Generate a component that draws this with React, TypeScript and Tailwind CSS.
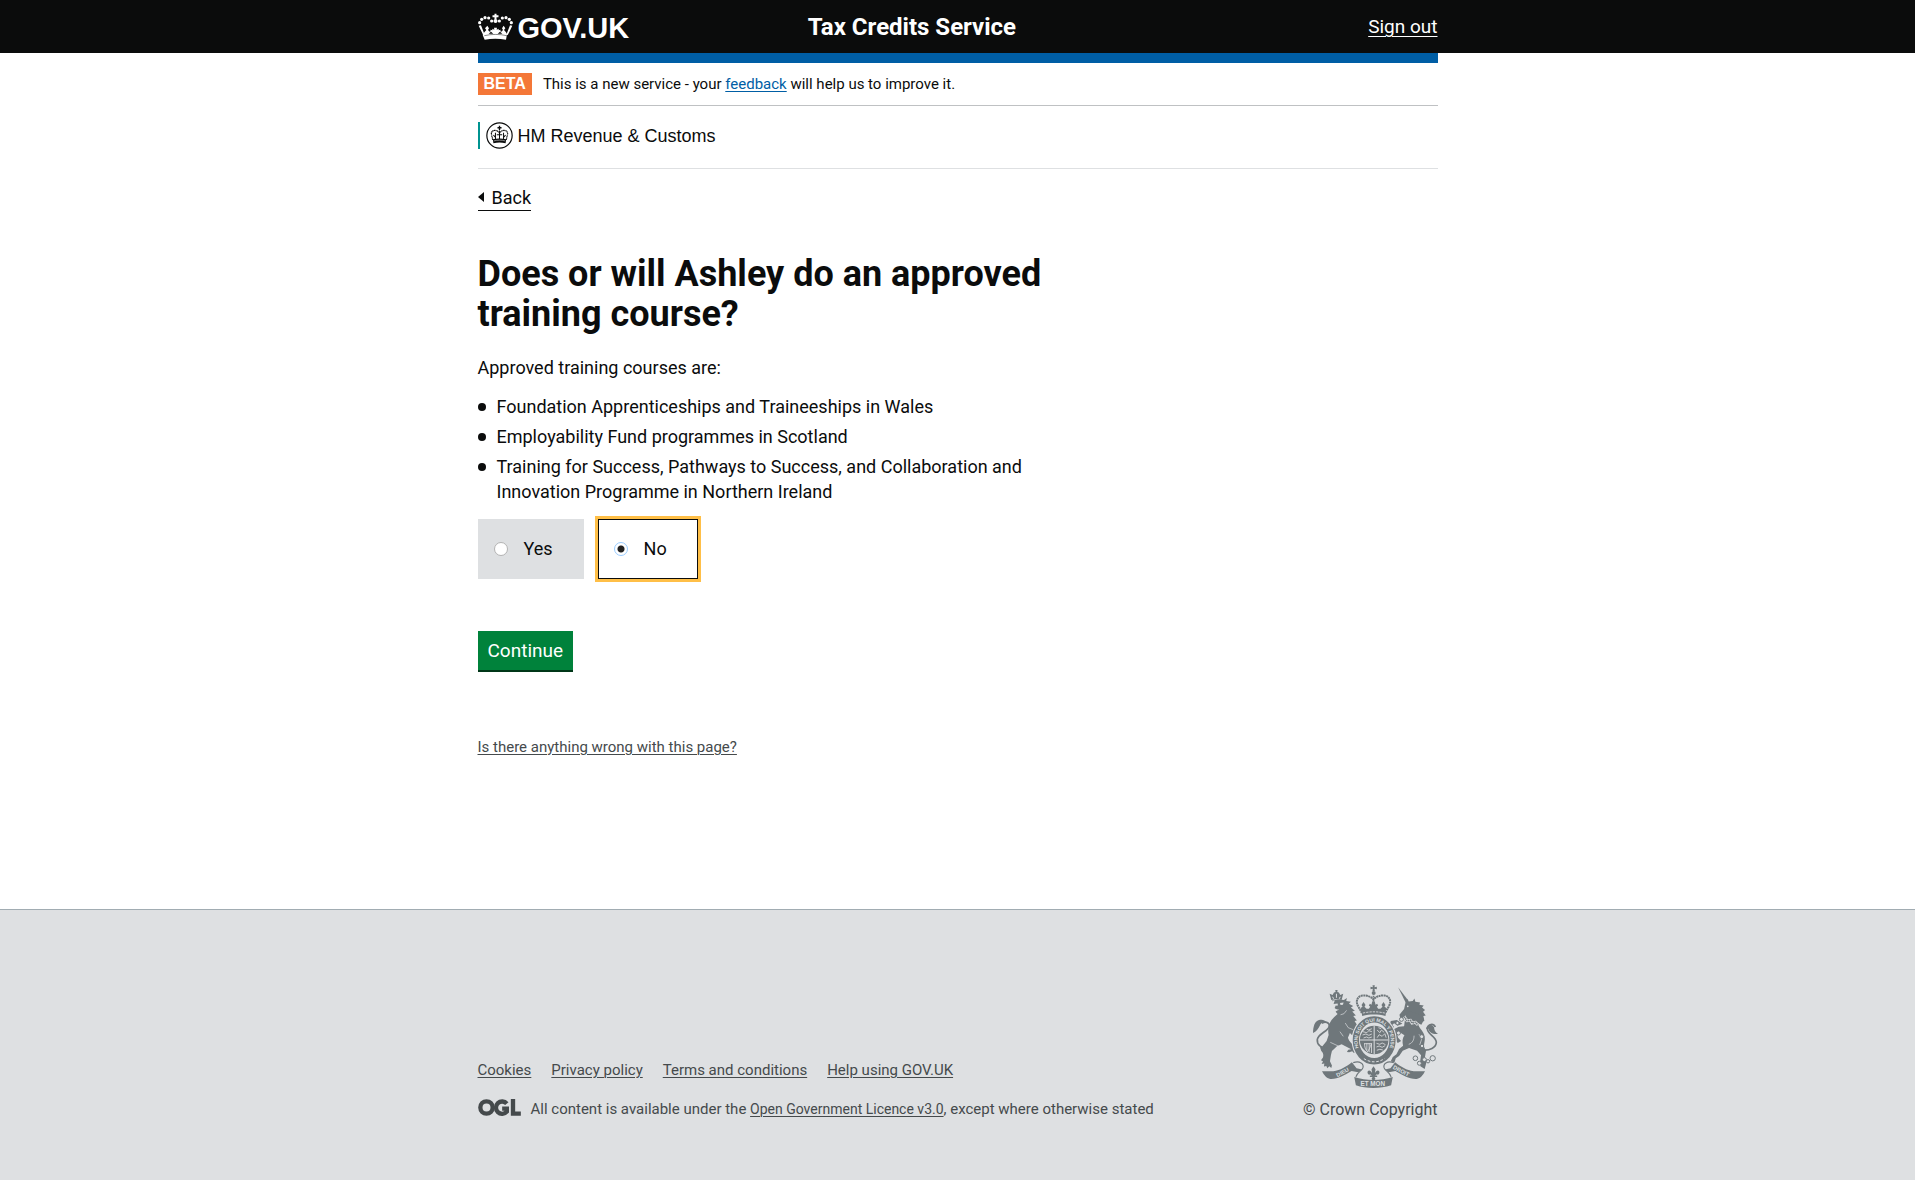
import { useState } from "react";

const footerLinks = ["Cookies", "Privacy policy", "Terms and conditions", "Help using GOV.UK"];

const courses = [
  "Foundation Apprenticeships and Traineeships in Wales",
  "Employability Fund programmes in Scotland",
  "Training for Success, Pathways to Success, and Collaboration and Innovation Programme in Northern Ireland",
];

function HeaderCrown() {
  return (
    <svg viewBox="24 36 105 81" className="h-[27px] w-[35px]" fill="#fff" aria-hidden="true">
      <path d="M73.500 38h6v5h6v6h-6v6h-6v-6h-6v-6h6z" />
      <circle cx="76.500" cy="60" r="6" />
      {[[65, 60], [56, 51], [45, 50], [35, 55], [29, 65], [88, 60], [97, 51], [108, 50], [118, 55], [124, 65]].map(([x, y]) => (
        <circle key={`${x}-${y}`} cx={x} cy={y} r="4.800" />
      ))}
      <path d="M26 74l7-1 9 23 2 4-4 3zM127 74l-7-1-9 23-2 4 4 3z" />
      <path d="M52 74l5 8-3 5 5 5 3-1-1-5 6 2v-5l6 3-1-6h9l-1 6 6-3v5l6-2-1 5 3 1 5-5-3-5 5-8 5 8-4 5 6 7 3 6-3 16c-21-4-43-4-64 0l-6-14 5-8 6-7-4-5z" />
      <path d="M43 104c21-5 46-5 67 0" stroke="#0b0c0c" strokeWidth="1.500" fill="none" />
      <path d="M56 98l7-6 7 6zM83 98l7-6 7 6z" fill="#0b0c0c" />
    </svg>
  );
}

function DepartmentCrest() {
  return (
    <svg viewBox="47 65 80 80" className="size-[27px]" fill="#0b0c0c" aria-hidden="true">
      <circle cx="87" cy="105" r="37.500" fill="none" stroke="#0b0c0c" strokeWidth="3.500" />
      <path d="M85 76h4v4h4v4h-4v5h-4v-5h-4v-4h4z" />
      <path d="M67 118L63 101c-1-7 5-12 12-11 6 1 9 4 12 8 3-4 6-7 12-8 7-1 13 4 12 11l-4 17" fill="none" stroke="#0b0c0c" strokeWidth="3.500" strokeDasharray="3.500 1" />
      <path d="M87 90v28M79 103h16M75 97v19M99 97v19M69 104l7 7M105 104l-7 7" fill="none" stroke="#0b0c0c" strokeWidth="3" />
      <path d="M67 116c13-3 27-3 40 0l-2 12c-12-3-24-3-36 0z" />
      <path d="M70 121c12-3 22-3 34 0" fill="none" stroke="#fff" strokeWidth="1.500" />
    </svg>
  );
}

function OglLogo() {
  return (
    <svg viewBox="24 144 128 51" className="h-[17px] w-[43px] shrink-0" fill="none" stroke="#454a4c" strokeWidth="13" role="img" aria-label="Open Government Licence">
      <circle cx="49" cy="169.500" r="18.500" />
      <path d="M110 158A18.500 18.500 0 1 0 110 182V173H96" />
      <path d="M128.500 144v44H152" />
    </svg>
  );
}

function RoyalArms() {
  const bg = "#dee0e2";
  return (
    <svg viewBox="69 44 376 309" className="h-[103px] w-[125px]" fill="#6f777b" stroke="none" role="img" aria-label="Royal coat of arms">
      {/* central crown */}
      <path d="M248 44h7l-1 6 7-1v7l-7-1 1 7h-7l1-7-7 1v-7l7 1z" />
      <circle cx="251.500" cy="68" r="6" />
      <path d="M216 128L203 104c-6-14 1-27 15-29 14-1 26 4 33 12 7-8 19-13 33-12 14 2 21 15 15 29l-13 24" fill="none" stroke="#6f777b" strokeWidth="6" strokeDasharray="6 1.500" />
      <path d="M251 76v42" stroke="#6f777b" strokeWidth="5" strokeDasharray="5 1.500" />
      <path d="M215 127l-3-14 6-4-3-5 6-9 6 9-3 5 6 6 7 0 4-6-4-4 3-5 5 3 2-10h8l2 10 5-3 3 5-4 4 4 6 7 0 6-6-3-5 6-9 6 9-3 5 6 4-3 14z" />
      <path d="M215 123c24-7 50-7 74 0l-2 14c-24-6-46-6-70 0z" />
      <path d="M219 128c22-5 44-5 66 0" fill="none" stroke={bg} strokeWidth="2.500" strokeDasharray="7 3" />

      {/* lion */}
      <path d="M124 89l-5-19 9 4 4-8 5-1-1-6h7l-1 6 5 1 4 8 9-4-5 19c-10-3-21-3-31 0z" />
      <path d="M128 79l3 6M139.500 70v12M151 79l-3 6" stroke={bg} strokeWidth="3" />
      <path d="M126 93c10-7 26-7 36-4l9-6-2 9 14 2-6 6 13 7-7 4 12 10-8 2 11 12-8 2 11 13-7 2 10 16c-3 12-2 24-1 34l-11-2-12-12-6 14c3 11 14 20 22 28l5 3 7 12-6 6-4-6-6 3-5-5-9 3-7-1 4-7 9-1-29-15-14 6-15 14-3 12-3 19 6 13-2 7-6-5-6 6-3-7-7 2 1-9-8 1 4-8-6-3 6-8c2-9 1-14-5-20l-4-11 6-2 14-17 6-18c-4-22 1-39 17-54l10-9-6-7 5-5-8-6 3-7-6-6 3-8-5-5 4-7z" />
      <path d="M131 101l12-2 1 6-10 1zM150 98l11-2-2 7-7 1zM134 116l14 2-11 4z" fill={bg} />
      <path d="M170 120l-8 10-10 3M166 158l9 14 15 6M150 184l10 14M121 216l26 12" stroke={bg} strokeWidth="2" fill="none" />
      <path d="M113 233c-19 3-33-11-31-26 3-17 34-25 36-40 1-12-14-15-22-8" fill="none" stroke="#6f777b" strokeWidth="5" />
      <path d="M69 188c1-20 4-34 18-39 10-3 18 0 22 6-10-1-17 4-20 12-4 8-10 17-20 21z" />

      {/* unicorn */}
      <path d="M325 50l31 41-8 6z" />
      <path d="M347 98l5-13 5 8 12-1 5-8 3 10 14 2-2 7 13 2-5 6 9 8-6 5 8 11-7 2 3 15-11 3c-10-11-24-17-40-22l-7 3-7 7-8-2-2-8 14-17z" />
      <path d="M347 136l10-14 40 12 6 14-8 15-48-22z" />
      <path d="M347 137l38 24c4 14 17 22 20 38 2 12-3 20-2 30l6 12-4 24 5 12-5 19-13-8-1-13 3-20-12-14-24-8-19 8-11 16-10 7-4 13-11-4 6-13 11-8 8-16 12-10c-3-12-2-22 4-31l-14-9-8 4 3 12 9 10-10 6-8-10-6-15 2-16 15-8 16-1z" />
      <path d="M338 160l-17-11-18 3-4 13 7 8 7-2-5-8 5-4 10 7z" />
      <path d="M343 139l9 12 10-1 5 8 10-2 8 8" fill="none" stroke={bg} strokeWidth="9" />
      <path d="M343 139l9 12 10-1 5 8 10-2 8 8" fill="none" stroke="#6f777b" strokeWidth="5" strokeDasharray="4 2" />
      <path d="M357 222c12-4 16-14 16-26M388 192l8 14-6 18" fill="none" stroke={bg} strokeWidth="2" />
      <circle cx="354" cy="108" r="2.500" fill={bg} />
      <path d="M398 239c21 3 42-7 42-23 0-18-29-25-27-42 2-13 18-17 24-4" fill="none" stroke="#6f777b" strokeWidth="5" />
      <path d="M409 176c1-14 18-18 24-5 1 9 3 14 12 20-16 2-28-6-29-16z" />
      <g fill={bg} stroke="#6f777b" strokeWidth="3">
        <circle cx="335" cy="147" r="6" />
        <circle cx="323" cy="158" r="5" />
        <circle cx="326" cy="188" r="6" />
        <circle cx="396" cy="199" r="6" />
        <circle cx="397" cy="227" r="5" />
        <circle cx="377" cy="264" r="7" />
        <circle cx="389" cy="279" r="6" />
        <circle cx="404" cy="268" r="6" />
        <circle cx="415" cy="273" r="5" />
        <circle cx="429" cy="264" r="8" />
      </g>

      {/* garter and shield */}
      <ellipse cx="253" cy="210" rx="68" ry="76" fill={bg} />
      <ellipse cx="253" cy="210" rx="55" ry="63" fill="none" stroke="#6f777b" strokeWidth="19" />
      <path id="garter" d="M218 253A50 58 0 1 1 288 253" fill="none" />
      <text fill={bg} fontSize="15" fontWeight="700" textAnchor="middle" fontFamily="Liberation Sans, sans-serif">
        <textPath href="#garter" startOffset="50%">HONI SOIT QUI MAL Y PENSE</textPath>
      </text>
      <path d="M222 265c19 13 43 13 62 0" fill="none" stroke={bg} strokeWidth="3" strokeDasharray="8 5" />
      <circle cx="253" cy="209" r="43" />
      <path d="M253 166v86M210 209h86" stroke={bg} strokeWidth="3" />
      <path d="M219 184l12 3 6-6 9 3M218 194l10-3 9 4 9-4M221 203l9-3 7 3 9-3M230 176l6 3 10-4M262 179l8 8 5-8 8 7M262 202l6-9 9 5 8-8 4 12M266 172l8 3M260 219l10 3 7-4 10 5M260 230l8-3 9 4 9-5M261 240l9-3 9 2M224 219c0 10 2 20 10 25M231 219v22M238 219v27M245 219v29M223 220h22c-5 12-8 20-12 25" fill="none" stroke={bg} strokeWidth="2.500" />

      {/* fleur-de-lis */}
      <path d="M251 288l6 9-2 12c5-11 14-10 14-2 0 5-5 8-8 5l-5 4h6v4h-8l3 6-6 6-6-6 3-6h-8v-4h6l-5-4c-3 3-8 0-8-5 0-8 9-9 14 2l-2-12z" />

      {/* motto scroll */}
      <path d="M96 303h34c22-3 38-13 56-27l14 18 17 4-12 8-20-4c-22 13-41 25-64 24-12-2-19-12-25-23z" />
      <path d="M406 303h-34c-22-3-38-13-56-27l-14 18-17 4 12 8 20-4c22 13 41 25 64 24 12-2 19-12 25-23z" />
      <path d="M190 277c20-6 33 3 29 16-3 9-18 14-21 27M312 277c-20-6-33 3-29 16 3 9 18 14 21 27" fill="none" stroke="#6f777b" strokeWidth="3.500" />
      <path d="M193 320c37 12 79 12 116 0l-5 25c-34 11-74 11-106 0z" />
      <g fill={bg} fontSize="19" fontWeight="700" fontFamily="Liberation Sans, sans-serif">
        <text x="212" y="346">ET MON</text>
        <text transform="translate(143 321) rotate(-29)" fontSize="17">DIEU</text>
        <text transform="translate(308 295) rotate(27)" fontSize="17">DROIT</text>
      </g>
    </svg>
  );
}

function Choice({ label, checked, onSelect }: { label: string; checked: boolean; onSelect: () => void }) {
  return (
    <label
      className={
        checked
          ? "flex h-[60px] cursor-pointer items-center border border-[#0b0c0c] bg-white pr-[30px] pl-[15px] outline-3 outline-[#ffbf47]"
          : "flex h-[60px] cursor-pointer items-center border border-[#dee0e2] bg-[#dee0e2] pr-[30px] pl-[15px]"
      }
    >
      <input
        type="radio"
        name="approved-training"
        checked={checked}
        onChange={onSelect}
        className="mr-4 size-[14px] appearance-none rounded-full border border-[#b3b3b3] bg-white outline-none checked:border-[#99ccff] checked:bg-[radial-gradient(circle,#222_0_3px,#fff_4px)]"
      />
      {label}
    </label>
  );
}

export default function App() {
  const [answer, setAnswer] = useState("No");
  return (
    <div className="bg-white font-['Roboto','Liberation_Sans',sans-serif] text-lg leading-[25px] text-[#0b0c0c]">
      <header className="bg-[#0b0c0c] text-white">
        <div className="mx-auto flex h-[53px] w-full max-w-[960px] items-center">
          <a href="#" className="flex basis-[34.4%] items-center gap-[5px] font-['Liberation_Sans',sans-serif] text-[29px] leading-8 font-bold">
            <HeaderCrown />
            <span className="pt-0.5">GOV.UK</span>
          </a>
          <span className="grow text-2xl font-bold">Tax Credits Service</span>
          <a href="#" className="text-[19px] underline decoration-1 underline-offset-[3px]">Sign out</a>
        </div>
      </header>

      <div className="mx-auto w-full max-w-[960px]">
        <div className="h-[10px] bg-[#005ea5]" />
        <div className="flex h-[43px] items-center gap-[11px] border-b border-[#bfc1c3] text-[15px]">
          <strong className="bg-[#f47738] px-[6px] font-['Liberation_Sans',sans-serif] text-base leading-[22px] font-bold text-white">BETA</strong>
          <p className="pt-px">
            This is a new service - your{" "}
            <a href="#" className="text-[#005ea5] underline decoration-1 underline-offset-2">feedback</a> will help us to improve it.
          </p>
        </div>
        <div className="border-b border-[#dee0e2] pt-4 pb-[19px]">
          <div className="flex h-[27px] items-center gap-[5px] border-l-2 border-[#009390] pl-[6px] font-['Liberation_Sans',sans-serif]">
            <DepartmentCrest />
            <span className="pt-0.5">HM Revenue &amp; Customs</span>
          </div>
        </div>

        <main className="pt-[14px] pb-[151px]">
          <a href="#" className="inline-flex items-center gap-2 border-b border-[#0b0c0c]">
            <svg viewBox="0 0 6 10" className="h-[10px] w-[6px]" aria-hidden="true">
              <path d="M6 0v10L0 5z" fill="#0b0c0c" />
            </svg>
            Back
          </a>
          <div className="max-w-[580px]">
            <h1 id="question" className="mt-[43px] text-4xl leading-10 font-bold">Does or will Ashley do an approved training course?</h1>
            <p className="mt-[21px]">Approved training courses are:</p>
            <ul className="mt-[14px] flex flex-col gap-[5px]">
              {courses.map((course) => (
                <li key={course} className="flex before:mt-[9px] before:mr-[11px] before:size-2 before:shrink-0 before:rounded-full before:bg-[#0b0c0c] before:content-['']">
                  {course}
                </li>
              ))}
            </ul>
          </div>
          <div role="radiogroup" aria-labelledby="question" className="mt-[15px] flex gap-[14px]">
            <Choice label="Yes" checked={answer === "Yes"} onSelect={() => setAnswer("Yes")} />
            <Choice label="No" checked={answer === "No"} onSelect={() => setAnswer("No")} />
          </div>
          <button type="button" className="mt-[52px] block h-[41px] border-b-2 border-[#003618] bg-[#00823b] px-[10px] text-[19px] text-white">
            Continue
          </button>
          <a href="#" className="mt-[65px] inline-block text-[15px] leading-5 text-[#454a4c] underline decoration-1 underline-offset-2">
            Is there anything wrong with this page?
          </a>
        </main>
      </div>

      <footer className="border-t border-[#a1acb2] bg-[#dee0e2] pt-[75px] pb-[61px] text-[15px] leading-5 text-[#454a4c]">
        <div className="mx-auto flex w-full max-w-[960px] items-end justify-between">
          <div className="flex flex-col gap-[19px]">
            <ul className="flex gap-5">
              {footerLinks.map((link) => (
                <li key={link}>
                  <a href="#" className="underline decoration-1 underline-offset-2">{link}</a>
                </li>
              ))}
            </ul>
            <div className="flex items-start gap-[10px] pb-px">
              <OglLogo />
              <p>
                All content is available under the{" "}
                <a href="#" className="text-sm leading-5 underline decoration-1 underline-offset-2">Open Government Licence v3.0</a>, except where otherwise stated
              </p>
            </div>
          </div>
          <a href="#" className="flex flex-col items-end gap-3 text-base leading-5">
            <RoyalArms />
            © Crown Copyright
          </a>
        </div>
      </footer>
    </div>
  );
}
